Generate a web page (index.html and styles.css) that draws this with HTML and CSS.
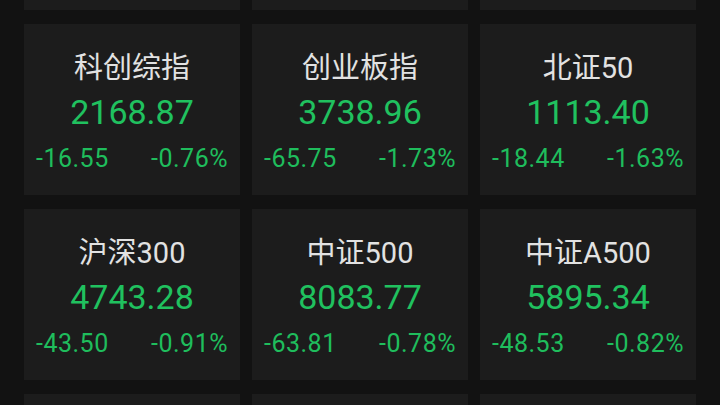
FILE: index.html
```html
<!DOCTYPE html>
<html lang="zh-CN">
<head>
    <meta charset="UTF-8">
    <meta name="viewport" content="width=device-width, initial-scale=1.0">
    <title>指数行情</title>
    <link rel="stylesheet" href="styles.css">
</head>
<body>
    <div class="index-grid">
        <!-- top row, scrolled mostly out of view -->
        <div class="card"></div>
        <div class="card"></div>
        <div class="card"></div>

        <div class="card">
            <div class="name">科创综指</div>
            <div class="price">2168.87</div>
            <div class="change">
                <span>-16.55</span>
                <span>-0.76%</span>
            </div>
        </div>
        <div class="card">
            <div class="name">创业板指</div>
            <div class="price">3738.96</div>
            <div class="change">
                <span>-65.75</span>
                <span>-1.73%</span>
            </div>
        </div>
        <div class="card">
            <div class="name">北证50</div>
            <div class="price">1113.40</div>
            <div class="change">
                <span>-18.44</span>
                <span>-1.63%</span>
            </div>
        </div>

        <div class="card">
            <div class="name">沪深300</div>
            <div class="price">4743.28</div>
            <div class="change">
                <span>-43.50</span>
                <span>-0.91%</span>
            </div>
        </div>
        <div class="card">
            <div class="name">中证500</div>
            <div class="price">8083.77</div>
            <div class="change">
                <span>-63.81</span>
                <span>-0.78%</span>
            </div>
        </div>
        <div class="card">
            <div class="name">中证A500</div>
            <div class="price">5895.34</div>
            <div class="change">
                <span>-48.53</span>
                <span>-0.82%</span>
            </div>
        </div>

        <!-- next row peeking in at the bottom -->
        <div class="card"></div>
        <div class="card"></div>
        <div class="card"></div>
    </div>
</body>
</html>
```

FILE: styles.css
```css
/* Index quote board */
body {
    margin: 0;
    padding: 0;
    background-color: #121212;
    font-family: Roboto, "Noto Sans CJK SC", sans-serif;
    overflow: hidden;
    height: 405px;
}

.index-grid {
    display: grid;
    grid-template-columns: repeat(3, 216px);
    column-gap: 12px;
    row-gap: 14px;
    padding: 0 24px;
    margin-top: -161px;
}

.card {
    height: 171px;
    box-sizing: border-box;
    background-color: #1c1c1c;
    padding-top: 27px;
    text-align: center;
}

.card .name {
    font-size: 29px;
    line-height: 34px;
    color: #e2e2e2;
}

.card .price {
    margin-top: 5px;
    font-size: 34px;
    line-height: 44px;
    color: #20c15f;
}

.card .change {
    display: flex;
    justify-content: space-between;
    margin-top: 10px;
    padding: 0 12px;
    font-size: 25px;
    line-height: 30px;
    letter-spacing: 0.5px;
    color: #1fbd5c;
}
```
